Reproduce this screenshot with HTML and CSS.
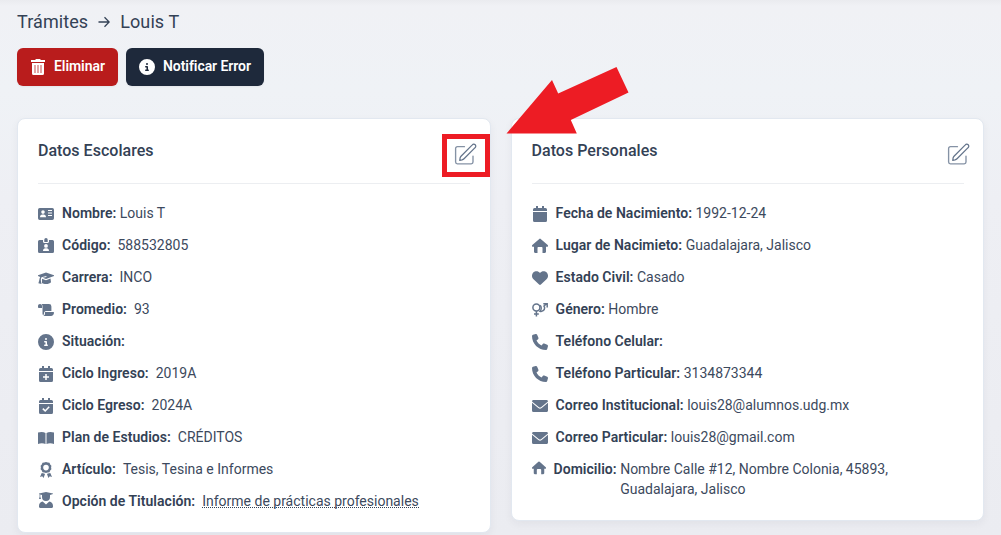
FILE: index.html
```html
<!DOCTYPE html>
<html lang="es">
<head>
<meta charset="utf-8">
<title>Trámites</title>
<link rel="stylesheet" href="styles.css">
</head>
<body>
<svg class="sprite" aria-hidden="true">
  <symbol id="trash" viewBox="0 0 14 16"><path d="M4.800 0h4.400l.5 1H14v2H0V1h4.300zM1 4h12v10.500A1.500 1.500 0 0 1 11.500 16h-9A1.500 1.500 0 0 1 1 14.500z"/><path class="trash-lines" d="M4 6v8M7 6v8M10 6v8"/></symbol>
  <symbol id="info" viewBox="0 0 512 512"><path fill-rule="evenodd" d="M256 512A256 256 0 1 0 256 0a256 256 0 1 0 0 512zM216 336h24V272H216c-13.300 0-24-10.700-24-24s10.700-24 24-24h48c13.300 0 24 10.700 24 24v88h8c13.300 0 24 10.700 24 24s-10.700 24-24 24H216c-13.300 0-24-10.700-24-24s10.700-24 24-24zm40-208a32 32 0 1 1 0 64 32 32 0 1 1 0-64z"/></symbol>
  <symbol id="card" viewBox="0 0 16 16"><path fill-rule="evenodd" d="M1.700 2h12.600A1.700 1.700 0 0 1 16 3.700v8.600a1.700 1.700 0 0 1-1.700 1.700H1.700A1.700 1.700 0 0 1 0 12.300V3.700A1.700 1.700 0 0 1 1.700 2zM5 4.300a1.800 1.800 0 1 0 0 3.600 1.800 1.800 0 0 0 0-3.600zM2 11.300h6c0-1.700-1-2.700-2.300-2.700H4.300C3 8.600 2 9.600 2 11.300zM10 5h4V4h-4zm0 2.500h4v-1h-4zM10 10h4V9h-4z"/></symbol>
  <symbol id="badge" viewBox="0 0 16 16"><path fill-rule="evenodd" d="M1.500 2H5v1.500C5 4.400 5.600 5 6.500 5h3c.9 0 1.500-.6 1.500-1.500V2h3.500A1.500 1.500 0 0 1 16 3.500v10a1.500 1.500 0 0 1-1.500 1.500h-13A1.500 1.500 0 0 1 0 13.500v-10A1.500 1.500 0 0 1 1.500 2zM8 6a1.900 1.900 0 1 0 0 3.800A1.900 1.900 0 0 0 8 6zm-3 7h6c0-1.700-1-2.700-2.400-2.700H7.400C6 10.300 5 11.300 5 13z"/><path d="M6.300 1.700a1.700 1.700 0 0 1 3.400 0V4H6.300z"/></symbol>
  <symbol id="cap" viewBox="0 0 16 16"><path d="M8 2.500 16 5.300v.7L8 8.900 4.700 7.800l3.700-.8V6L3.500 7.300C3 8 2.800 9 2.800 10L3.500 14 .4 13.200l.9-3.100C1.400 9 1.700 8 2.200 7L0 6v-.7zM4 8.700l4 1.500 4.500-1.600.5 3.600C12.100 13.300 10.200 14 8 14c-1.500 0-3-.4-4-1z"/></symbol>
  <symbol id="scroll" viewBox="0 0 16 16"><path d="M0 4.200C0 2.800.8 2 2 2s2 .8 2 2v2H1C.5 6 0 5.600 0 5zM3.700 2H11a2.400 2.400 0 0 1 2.400 2.400V9H8.200C6.700 9 6 10 6 11.400c0 .8-.3 1.300-.8 1.700C4.500 12.800 4.500 12 4.500 11V4.200c0-.9-.3-1.600-.8-2.200zM7 10h8.400c.4 0 .6.200.6.600C16 13 14.600 14 13 14H5.200C6.500 13.500 7 12.800 7 11z"/></symbol>
  <symbol id="calendar" viewBox="0 0 14 16"><path d="M3 0h2v2h4V0h2v2h1.500A1.500 1.500 0 0 1 14 3.500V5H0V3.500A1.500 1.500 0 0 1 1.500 2H3zM0 6h14v8.500a1.500 1.500 0 0 1-1.500 1.500h-11A1.500 1.500 0 0 1 0 14.500z"/></symbol>
  <symbol id="book" viewBox="0 0 16 16"><path d="M0 2.600C3 1.700 5.700 2 7.500 3v11C5.400 12.900 2.500 12.900 0 14zM16 2.600C13 1.700 10.300 2 8.500 3v11c2.100-1.100 5-1.100 7.500 0z"/></symbol>
  <symbol id="award" viewBox="0 0 12 16"><path fill-rule="evenodd" d="m6 0 1.700.6 1.800.2.700 1.600 1.200 1.400-.3 1.800.3 1.700-1.200 1.300-.7 1.700-1.800.2L6 11.100l-1.700-.6-1.800-.2-.7-1.700L.6 7.300.9 5.600.6 3.800l1.200-1.400L2.500.8 4.300.6zm0 2.800a2.800 2.800 0 1 0 0 5.600 2.800 2.800 0 0 0 0-5.600z"/><path d="m1.700 11 2.400.6.900.5L3.600 16l-1.400-1.700L0 15zm8.600 0-2.400.6-.9.500L8.400 16l1.400-1.700 2.200.7z"/></symbol>
  <symbol id="graduate" viewBox="0 0 14 16"><path d="M0 1.400 7 0l7 1.400v.7l-3 .8V5a4 4 0 0 1-8 0V2.900l-1.700-.4v2.300L2 7H0l.6-2.200V2.300L0 2.100zM3.700 9.600 7 12.500l3.300-2.900C12.600 10 14 11.700 14 14v.8c0 .7-.5 1.200-1.200 1.200H1.200C.5 16 0 15.500 0 14.800V14c0-2.300 1.400-4 3.700-4.400z"/></symbol>
  <symbol id="home" viewBox="0 0 16 16"><path d="M7.300.9a1 1 0 0 1 1.400 0l7 6.200c.7.700.3 1.700-.7 1.700h-1v5c0 .7-.5 1.200-1.200 1.200h-2.300V10c0-.6-.4-1-1-1h-3c-.6 0-1 .4-1 1v5H3.200C2.500 15 2 14.500 2 13.800v-5H1c-1 0-1.400-1-.7-1.700z"/></symbol>
  <symbol id="heart" viewBox="0 0 16 16"><path d="M1.500 9.300C-.4 7.600-.5 4.400 1.200 2.600 3.200.5 6.300.7 8 2.900c1.700-2.200 4.800-2.400 6.800-.3 1.700 1.800 1.600 5-.3 6.700l-5.600 5.300a1.300 1.300 0 0 1-1.800 0z"/></symbol>
  <symbol id="gender" viewBox="0 0 16 16"><g class="gender-lines"><circle cx="4.400" cy="5.600" r="3.500"/><path d="M4.400 9.100V14.500M2 12h4.800M8.200 3.300C9.600 5 9.600 7.600 8 9.200c2.200.7 4.600-.9 4.600-3.300 0-.8-.2-1.400-.6-1.900L14.600 1.700M11.300 1.700h3.900v3.800"/></g></symbol>
  <symbol id="phone" viewBox="0 0 512 512"><path d="M164.900 24.600c-7.700-18.600-28-28.500-47.400-23.200l-88 24C12.100 30.200 0 46 0 64c0 247.400 200.600 448 448 448 18 0 33.800-12.100 38.600-29.500l24-88c5.300-19.400-4.600-39.700-23.200-47.400l-96-40c-16.300-6.800-35.200-2.100-46.300 11.600L304.700 368C234.300 334.700 177.300 277.700 144 207.300l49.300-40.400c13.700-11.200 18.400-30 11.600-46.300z"/></symbol>
  <symbol id="mail" viewBox="0 0 16 16"><path d="M1.500 2h13c.9 0 1.500.6 1.500 1.500L9 9.200a1.600 1.600 0 0 1-2 0L0 3.500C0 2.600.6 2 1.500 2zM0 4.700l6.300 5.300a2.700 2.700 0 0 0 3.400 0L16 4.700v7.800c0 .9-.6 1.500-1.500 1.500h-13A1.500 1.500 0 0 1 0 12.500z"/></symbol>
  <symbol id="edit" viewBox="0 0 24 24"><path d="m16.860 4.490 1.690-1.690a1.880 1.880 0 1 1 2.650 2.650L10.580 16.070a4.500 4.500 0 0 1-1.900 1.130L6.500 17.600l.3-2.280a4.500 4.500 0 0 1 1.130-1.900z"/><path class="frame" d="M19.200 13.500v5.800a1.700 1.700 0 0 1-1.700 1.700H4.200a1.700 1.700 0 0 1-1.700-1.700V6.200A1.700 1.700 0 0 1 4.200 4.500H11"/></symbol>
</svg>

<main class="page">
  <nav class="breadcrumb">
    <span>Trámites</span>
    <svg class="crumb-arrow" viewBox="0 0 12 12"><path d="M.5 6h10.500M6.500 1.300 11.200 6l-4.700 4.700"/></svg>
    <span>Louis T</span>
  </nav>
  <div class="actions">
    <button class="btn btn-danger"><svg><use href="#trash"/></svg><span>Eliminar</span></button>
    <button class="btn btn-dark"><svg><use href="#info"/></svg><span>Notificar Error</span></button>
  </div>

  <div class="cards">
    <section class="card school">
      <header class="card-head"><h2>Datos Escolares</h2><svg class="edit"><use href="#edit"/></svg></header>
      <ul class="rows">
        <li><svg><use href="#card"/></svg><b>Nombre:</b><span class="near">Louis T</span></li>
        <li><svg><use href="#badge"/></svg><b>Código:</b><span>588532805</span></li>
        <li><svg><use href="#cap"/></svg><b>Carrera:</b><span>INCO</span></li>
        <li><svg><use href="#scroll"/></svg><b>Promedio:</b><span>93</span></li>
        <li><svg><use href="#info"/></svg><b>Situación:</b></li>
        <li><svg viewBox="0 0 16 16"><use href="#calendar" width="16" height="16"/><path class="mark" d="M8 8v6M5 11h6"/></svg><b>Ciclo Ingreso:</b><span>2019A</span></li>
        <li><svg viewBox="0 0 16 16"><use href="#calendar" width="16" height="16"/><path class="mark" d="m4.800 10.600 2.400 2.300 4-4.200"/></svg><b>Ciclo Egreso:</b><span>2024A</span></li>
        <li><svg><use href="#book"/></svg><b>Plan de Estudios:</b><span>CRÉDITOS</span></li>
        <li><svg><use href="#award"/></svg><b>Artículo:</b><span>Tesis, Tesina e Informes</span></li>
        <li><svg class="raised"><use href="#graduate"/></svg><b>Opción de Titulación:</b><span class="hint">Informe de prácticas profesionales</span></li>
      </ul>
    </section>

    <section class="card personal">
      <header class="card-head"><h2>Datos Personales</h2><svg class="edit"><use href="#edit"/></svg></header>
      <ul class="rows">
        <li><svg><use href="#calendar"/></svg><b>Fecha de Nacimiento:</b><span>1992-12-24</span></li>
        <li><svg><use href="#home"/></svg><b>Lugar de Nacimieto:</b><span>Guadalajara, Jalisco</span></li>
        <li><svg><use href="#heart"/></svg><b>Estado Civil:</b><span>Casado</span></li>
        <li><svg><use href="#gender"/></svg><b>Género:</b><span>Hombre</span></li>
        <li><svg><use href="#phone"/></svg><b>Teléfono Celular:</b></li>
        <li><svg><use href="#phone"/></svg><b>Teléfono Particular:</b><span>3134873344</span></li>
        <li><svg><use href="#mail"/></svg><b>Correo Institucional:</b><span>louis28@alumnos.udg.mx</span></li>
        <li><svg><use href="#mail"/></svg><b>Correo Particular:</b><span>louis28@gmail.com</span></li>
        <li class="address"><svg><use href="#home"/></svg><b>Domicilio:</b><span>Nombre Calle #12, Nombre Colonia, 45893, Guadalajara, Jalisco</span></li>
      </ul>
    </section>
  </div>
</main>
<div class="callout-box"></div>
<svg class="callout-arrow" viewBox="0 0 124 70"><path d="M.5 66.500 46 13l6.200 13.500L110.500 0l12 25.500L64.800 53l6 13.500z"/></svg>
</body>
</html>
```

FILE: styles.css
```css
* { box-sizing: border-box; }
body {
  margin: 0;
  height: 535px;
  overflow: hidden;
  position: relative;
  font-family: Roboto, "Liberation Sans", sans-serif;
  font-size: 14px;
  line-height: 20px;
  color: #334155;
  background: linear-gradient(#eaebef 0, #f0f1f5 6px, #eff2f6 90px, #eeeff4 200px, #ebecf1 100%);
}
.sprite { display: none; }
.page { padding: 8px 17px 0; }
.breadcrumb {
  display: flex;
  align-items: center;
  height: 28px;
  font-size: 18px;
  line-height: 28px;
  letter-spacing: 0.09px;
}
.crumb-arrow {
  width: 12px;
  height: 12px;
  margin: 0 10px;
  fill: none;
  stroke: #334155;
  stroke-width: 1.3;
}
.actions { display: flex; gap: 8px; margin-top: 12px; }
.btn {
  display: flex;
  align-items: center;
  height: 38px;
  padding: 0 12.5px 0 13px;
  border: 0;
  border-radius: 6px;
  color: #fff;
  font: 600 14px/20px Roboto, "Liberation Sans", sans-serif;
  letter-spacing: -0.06px;
  box-shadow: 0 1px 2px #0000000d;
}
.btn svg { width: 16px; height: 16px; fill: currentColor; margin-right: 8px; }
.btn span { padding-bottom: 2px; white-space: nowrap; }
.btn-danger { background: #b91c1c; width: 101px; }
.btn-dark { background: #1e293b; width: 138px; }
.trash-lines { stroke: #d67777; stroke-width: 1.3; }
.cards {
  display: grid;
  grid-template-columns: 474px 473px;
  gap: 20px;
  align-items: start;
  margin-top: 32px;
}
.card {
  background: #fff;
  border: 1px solid #e2e8f0;
  border-radius: 8px;
  box-shadow: 0 3px 8px #1e293b0d;
  padding: 20px;
}
.school { height: 415px; }
.personal { height: 403px; padding: 20px 19px 20px 19.6px; }
.card-head {
  display: flex;
  justify-content: space-between;
  height: 45px;
  border-bottom: 1px solid #eceef1;
}
h2 { margin: 0; font-size: 16px; line-height: 24px; font-weight: 500; letter-spacing: 0.02px; }
.edit {
  width: 25px;
  height: 25px;
  margin: 3px -8px 0 0;
  fill: none;
  stroke: #64748b;
  stroke-width: 1.2;
  stroke-linecap: round;
  stroke-linejoin: round;
}
.personal .edit { margin-right: -7px; }
.frame { stroke: #8592a5; stroke-width: 1.3; }
.rows { list-style: none; margin: 0; padding: 19px 0 0; display: grid; gap: 12px; }
.rows li { display: flex; height: 20px; }
.rows svg { flex: none; width: 16px; height: 16px; margin: 3px 8px 0 0; fill: #64748b; }
.rows svg.raised { margin-top: 1px; }
.rows b { font-weight: 600; white-space: nowrap; letter-spacing: 0.025px; }
.rows span { margin-left: 3.5px; color: #3c495d; }
.school .rows span { margin-left: 7px; }
.school .rows .near { margin-left: 3.5px; }
.school .rows .hint { height: 17px; border-bottom: 1px dotted #334155; }
.mark { fill: none; stroke: #fff; stroke-width: 1.5; }
.gender-lines { fill: none; stroke: #64748b; stroke-width: 1.5; }
.rows .address { height: 40px; }
.address svg { width: 14px; height: 14px; margin-top: 2px; }
.address span { width: 285px; }
.callout-box {
  position: absolute;
  left: 442px;
  top: 134px;
  width: 48px;
  height: 43px;
  border: 5px solid #ed1c24;
}
.callout-arrow {
  position: absolute;
  left: 506px;
  top: 67px;
  width: 124px;
  height: 70px;
  fill: #ed1c24;
}
```
